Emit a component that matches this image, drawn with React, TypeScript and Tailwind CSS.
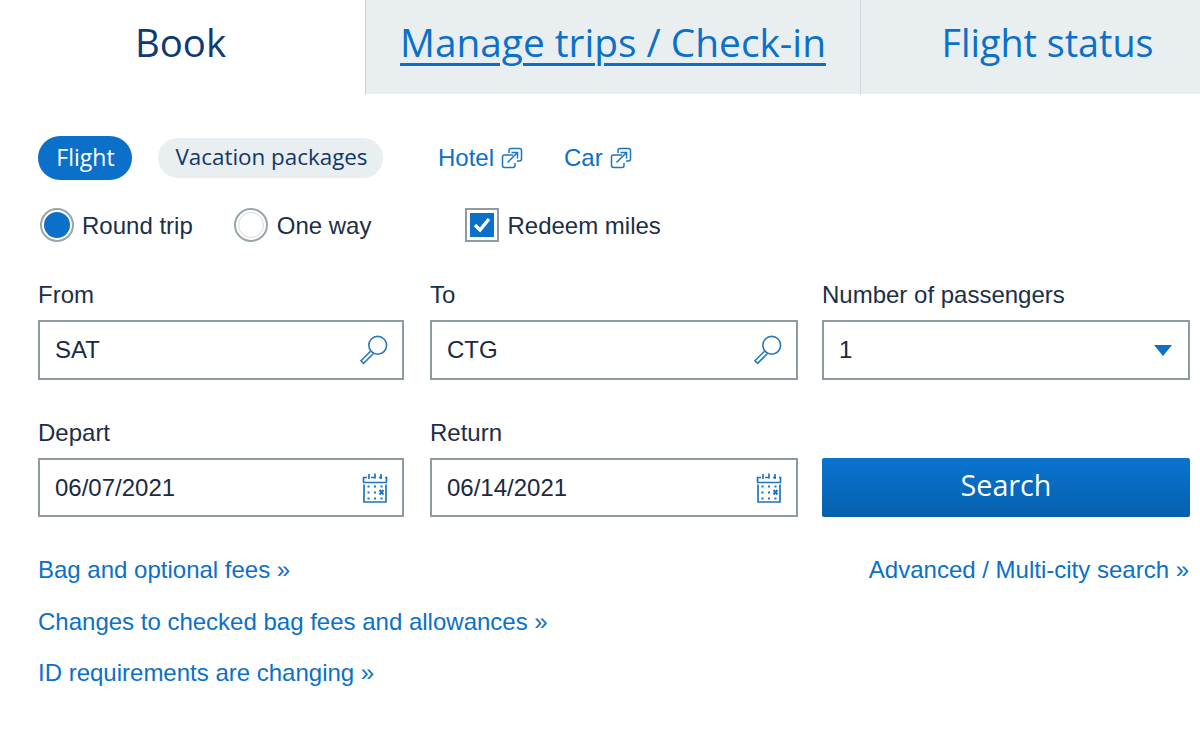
import type { ReactNode } from "react";

const BODY = "font-['Liberation_Sans',Arial,sans-serif]";
const HEAD = "font-['Open_Sans',sans-serif]";

function ExternalIcon() {
  return (
    <svg width="22" height="22" viewBox="0 0 22 22" fill="none" stroke="#1a76c6" strokeWidth="1.5" className="shrink-0">
      <path d="M8 6V3.5a2 2 0 0 1 2-2h8.5a2 2 0 0 1 2 2V12a2 2 0 0 1-2 2H16" />
      <path d="M12 8H3.5a2 2 0 0 0-2 2v8.5a2 2 0 0 0 2 2H12a2 2 0 0 0 2-2V16" />
      <path d="M6.5 15.5 16 6M10.5 5.5h6v6" />
    </svg>
  );
}

function SearchIcon() {
  return (
    <svg width="30" height="30" viewBox="0 0 30 30" fill="none" stroke="#2a78bd" strokeWidth="1.6" className="mr-[-1px] shrink-0">
      <circle cx="18.7" cy="10.3" r="8.9" />
      <path d="M11.5 16.2 2 25.8l2.6 2.6 9.6-9.6" />
    </svg>
  );
}

function CalendarIcon() {
  return (
    <svg width="26" height="30" viewBox="0 0 26 30" fill="none" stroke="#1f74bf" className="shrink-0">
      <path d="M1.5 9V4.5h3.5M9 4.5h4.5M17 4.5h3M23 4.5h1.5V9M1 9.5h24" strokeWidth="1.7" />
      <path d="M2 11.5V29h22V11.5" strokeWidth="1.7" />
      <path d="M7 1v5M13 0.5v5M19 1v5" strokeWidth="1.7" />
      <path d="M5.5 13.5h2M12 13.5h2M18.5 13.5h2M5.5 19.5h2M12 19.5h2M5.5 25.5h2M12 25.5h2M18.5 25.5h2" strokeWidth="2.2" />
      <path d="M17.5 17l4 4.5M21.5 17l-4 4.5" strokeWidth="2" />
    </svg>
  );
}

function Field({
  label,
  value,
  icon,
  className,
  boxHeight = "h-[60px]",
}: {
  label: string;
  value: string;
  icon: ReactNode;
  className?: string;
  boxHeight?: string;
}) {
  return (
    <div className={`flex flex-col ${className ?? ""}`}>
      <label className="h-[39px] text-[24px] leading-[28px] text-[#1c2f46]">{label}</label>
      <div className={`flex ${boxHeight} items-center justify-between border-2 border-[#8f9ba1] pl-[15px] pr-[14px] text-[24px] text-[#1a2a40]`}>
        <span>{value}</span>
        {icon}
      </div>
    </div>
  );
}

export default function App() {
  return (
    <div className={`h-[735px] w-[1200px] overflow-hidden bg-white ${BODY}`}>
      {/* tabs */}
      <div className={`flex h-[94px] ${HEAD}`}>
        <div className="flex w-[366px] items-center justify-center border-r border-[#c5ced3] pb-[8px] pr-[4px] text-[38.4px] text-[#0e3a75]">Book</div>
        <div className="flex w-[495px] items-center justify-center border-r border-[#d0d8dc] bg-[#e9eef0] pb-[10px] text-[38.8px] text-[#0b70c9] underline decoration-[3px] underline-offset-[6px]">Manage trips / Check-in</div>
        <div className="flex flex-1 items-center justify-center bg-[#e9eef0] pb-[8px] pl-[34px] text-[37.7px] text-[#0b70c9]">Flight status</div>
      </div>

      <div className="pl-[38px] pr-[10px]">
        {/* product pills */}
        <div className="mt-[42px] flex h-[44px] items-center">
          <div className={`flex h-[44px] w-[94px] items-center justify-center rounded-full bg-[#0b70c9] pb-[2px] pl-[1px] text-[23px] text-white ${HEAD}`}>Flight</div>
          <div className={`ml-[26px] flex h-[40px] w-[225px] items-center justify-center rounded-full bg-[#e9eef0] pb-[2px] pl-[2px] text-[22.4px] text-[#123766] ${HEAD}`}>Vacation packages</div>
          <div className="ml-[55px] flex items-center gap-[7px] text-[24px] text-[#0b70c9]">Hotel <ExternalIcon /></div>
          <div className="ml-[41px] flex items-center gap-[7px] text-[24px] text-[#0b70c9]">Car <ExternalIcon /></div>
        </div>

        {/* trip type */}
        <div className="mt-[27px] flex h-[36px] items-center text-[24px] text-[#1c2f46]">
          <div className="ml-[2px] flex h-[34px] w-[34px] items-center justify-center rounded-full border-2 border-[#9aa5ab]">
            <div className="h-[26px] w-[26px] rounded-full bg-[#0b70c9]" />
          </div>
          <span className="ml-[8px] pt-[2px]">Round trip</span>
          <div className="ml-[41px] flex h-[34px] w-[34px] items-center justify-center rounded-full border-2 border-[#9aa5ab]">
            <div className="h-[26px] w-[26px] rounded-full border border-[#d5dadd]" />
          </div>
          <span className="ml-[9px] pt-[2px]">One way</span>
          <div className="ml-[94px] flex h-[34px] w-[34px] items-center justify-center border-2 border-[#8f9ba1]">
            <div className="flex h-[24px] w-[24px] items-center justify-center bg-[#0b70c9]">
              <svg width="18" height="16" viewBox="0 0 18 16" fill="none" stroke="white" strokeWidth="3.4">
                <path d="M2 8l5 5 9-11" />
              </svg>
            </div>
          </div>
          <span className="ml-[8px] pt-[2px]">Redeem miles</span>
        </div>

        {/* form */}
        <div className="mt-[38px] grid grid-cols-[368px_368px_368px] gap-x-[24px] gap-y-[39px]">
          <Field label="From" value="SAT" icon={<SearchIcon />} className="w-[366px]" />
          <Field label="To" value="CTG" icon={<SearchIcon />} />
          <Field
            label="Number of passengers"
            value="1"
            icon={<svg width="18" height="11" viewBox="0 0 18 11" className="mr-[2px]"><path d="M0 0h18L9 11Z" fill="#0b70c9" /></svg>}
          />
          <Field label="Depart" value="06/07/2021" icon={<CalendarIcon />} className="w-[366px]" boxHeight="h-[59px]" />
          <Field label="Return" value="06/14/2021" icon={<CalendarIcon />} boxHeight="h-[59px]" />
          <div className="flex flex-col justify-end">
            <div className={`flex h-[59px] items-center justify-center rounded-[2px] bg-gradient-to-b from-[#0b74d0] to-[#0560ac] pb-[5px] text-[28.7px] text-white ${HEAD}`}>Search</div>
          </div>
        </div>

        {/* links */}
        <div className="mr-[1px] mt-[33px] flex items-start justify-between text-[24px] leading-[40px] text-[#0b70c9]">
          <div className="flex flex-col gap-[11.5px]">
            <span>Bag and optional fees »</span>
            <span>Changes to checked bag fees and allowances »</span>
            <span>ID requirements are changing »</span>
          </div>
          <span>Advanced / Multi-city search »</span>
        </div>
      </div>
    </div>
  );
}
